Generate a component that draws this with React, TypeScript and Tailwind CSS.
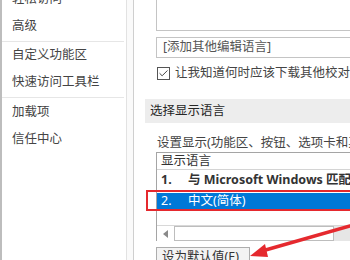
import { Check } from 'lucide-react';

const navTop = ['轻松访问', '高级'];
const navMid = ['自定义功能区', '快速访问工具栏'];
const navBottom = ['加载项', '信任中心'];

function NavItem({ label, className = '' }: { label: string; className?: string }) {
  return (
    <div className={`h-[27px] shrink-0 flex items-center pl-[10px] text-[12.5px] text-[#444] ${className}`}>{label}</div>
  );
}

export default function App() {
  return (
    <div className="relative w-[350px] h-[260px] overflow-hidden bg-white flex font-['Noto_Sans','Noto_Sans_CJK_SC',sans-serif]">
      {/* left nav */}
      <div className="w-[2px] bg-[#bdbdbd] shrink-0" />
      <div className="w-[125px] shrink-0 border-r border-[#e2e2e2] flex flex-col">
        <NavItem label={navTop[0]} className="mt-[-14px]" />
        <NavItem label={navTop[1]} />
        <div className="h-px shrink-0 bg-[#e6e6e6] mt-[1px] mr-[2px]" />
        {navMid.map((l) => <NavItem key={l} label={l} />)}
        <div className="h-px shrink-0 bg-[#e6e6e6] mt-[1px] mr-[2px]" />
        {navBottom.map((l, i) => <NavItem key={l} label={l} className={i === 0 ? 'mt-[1px]' : ''} />)}
      </div>
      <div className="w-[6px] shrink-0 bg-[#fafafa]" />
      <div className="w-px shrink-0 bg-[#cfcfcf]" />

      {/* right panel */}
      <div className="flex-1 min-w-0 flex flex-col text-[12.5px] text-[#444]">
        <div className="shrink-0 ml-[22px] h-[31px] w-[260px] border-l border-b border-[#c4c4c4]" />
        <div className="shrink-0 ml-[22px] mt-[6px] h-[21px] w-[260px] border border-[#c4c4c4] flex items-center pl-[6px] text-[#555] whitespace-nowrap">
          [添加其他编辑语言]
        </div>
        <div className="shrink-0 ml-[23px] mt-[8px] flex items-center gap-[5px] whitespace-nowrap h-[14px]">
          <div className="w-[13px] h-[13px] border border-[#555] bg-white flex items-center justify-center shrink-0">
            <Check size={11} strokeWidth={2} className="text-[#333]" />
          </div>
          <span>让我知道何时应该下载其他校对工具</span>
        </div>
        <div className="shrink-0 ml-[11px] mt-[19px] h-[24px] bg-[#ededed] flex items-center pl-[5px] text-[#262626] whitespace-nowrap">
          选择显示语言
        </div>
        <div className="shrink-0 ml-[23px] mt-[12px] h-[16px] flex items-center whitespace-nowrap">
          设置显示(功能区、按钮、选项卡和其他控件)
        </div>
        <div className="shrink-0 ml-[22px] mt-[1px] w-[260px] h-[89px] border-l border-t border-[#a5a5a5] flex flex-col">
          <div className="shrink-0 h-[17px] border-b border-[#d4d4d4] flex items-center pl-[4px] whitespace-nowrap text-[#333]">显示语言</div>
          <div className="shrink-0 h-[20px] flex items-center pl-[4px] font-bold text-[#333] whitespace-nowrap">
            <span className="w-[27px]">1.</span>与 Microsoft Windows 匹配
          </div>
          <div className="shrink-0 h-[16px] mt-[3px] bg-[#0078d7] flex items-center pl-[4px] text-white whitespace-nowrap">
            <span className="w-[27px]">2.</span>中文(简体)
          </div>
          <div className="shrink-0 mt-auto h-[16px] flex border-t border-[#d8d8d8]">
            <div className="w-[17px] flex items-center justify-center">
              <svg width="5" height="8" viewBox="0 0 5 8"><path d="M5 0 L0 4 L5 8 Z" fill="#8a8a8a" /></svg>
            </div>
            <div className="w-[160px] border border-[#bdbdbd] bg-white" />
            <div className="flex-1 bg-[#e6e6e6]" />
          </div>
        </div>
        <div className="shrink-0 ml-[22px] mt-[6px] w-[94px] h-[20px] border border-[#adadad] bg-[#f3f3f3] flex items-center pl-[5px] whitespace-nowrap text-[#333]">
          设为默认值(E)
        </div>
      </div>

      {/* red annotation box */}
      <div className="absolute left-[146px] top-[190px] w-[220px] h-[21px] border-2 border-[#e5292e]" />

      {/* red arrow */}
      <svg className="absolute left-0 top-0" width="350" height="260" viewBox="0 0 350 260">
        <path d="M350 226 L262 251" stroke="#e5292e" strokeWidth="3.5" strokeLinecap="round" />
        <path d="M250 256 L265 244 L268 257 Z" fill="#e5292e" />
      </svg>
    </div>
  );
}
